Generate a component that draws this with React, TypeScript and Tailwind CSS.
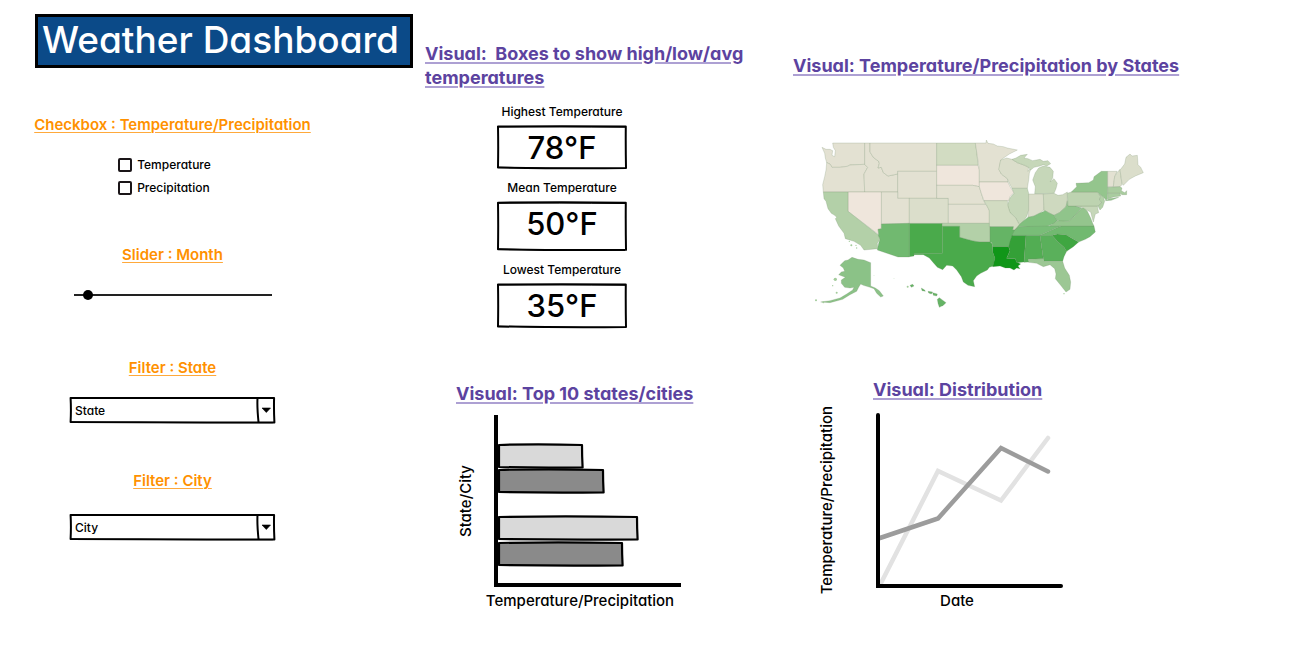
import { useState, type ReactNode } from "react";

const STATES: { id: string; fill: string; points: string }[] = [
  { id: "WA", fill: "#e3e1d2", points: "36,52 48,58 60,58 68,62 66,76 74,80 76,62 70,52 68,39 164,39 164,103 120,105 112,109 90,112 66,112 60,102 50,98 46,84 44,70" },
  { id: "OR", fill: "#e3e1d2", points: "50,98 60,102 66,112 90,112 112,109 120,105 164,103 173,112 162,132 164,186 40,186 38,164 44,140 48,120" },
  { id: "ID", fill: "#e3e1d2", points: "164,39 180,39 180,66 190,82 206,94 208,100 204,114 214,112 220,128 234,138 263,132 263,186 164,186 162,132 173,112 164,103" },
  { id: "MT", fill: "#e3e1d2", points: "180,39 380,39 380,124 263,124 263,132 234,138 220,128 214,112 204,114 208,100 206,94 190,82 180,66" },
  { id: "WY", fill: "#e3e1d2", points: "263,124 380,124 380,205 263,205" },
  { id: "UT", fill: "#e3e1d2", points: "214,186 263,186 263,205 298,205 298,280 214,282" },
  { id: "NV", fill: "#efe6dc", points: "114,186 214,186 214,296 204,298 206,314 114,244" },
  { id: "CA", fill: "#b3d0a8", points: "40,186 114,186 114,244 206,316 210,328 202,340 203,356 162,360 152,346 132,334 106,326 102,310 86,288 76,266 80,262 74,256 64,250 54,236 48,214 42,206" },
  { id: "AZ", fill: "#71b970", points: "214,282 298,280 298,381 264,381 202,360 206,340 210,328 205,316 206,312 204,298 214,296" },
  { id: "NM", fill: "#4aaa4b", points: "298,280 397,280 397,370 312,370 312,378 298,380" },
  { id: "CO", fill: "#dbdecb", points: "298,205 415,205 415,280 298,280" },
  { id: "ND", fill: "#d2dcc2", points: "380,39 496,39 500,62 504,106 380,106" },
  { id: "SD", fill: "#efe6dc", points: "380,106 504,106 508,120 508,170 488,166 380,166" },
  { id: "NE", fill: "#e3e1d2", points: "380,166 488,166 508,170 514,190 520,210 527,223 415,223 415,205 380,205" },
  { id: "KS", fill: "#e3e1d2", points: "415,223 527,223 534,232 538,242 538,280 415,280" },
  { id: "OK", fill: "#b3d0a8", points: "397,280 540,280 541,336 510,336 490,333 470,328 449,322 449,289 397,289" },
  { id: "TX", fill: "#4aaa4b", points: "397,289 449,289 449,322 470,328 490,333 510,336 541,336 547,342 548,366 555,384 550,408 538,412 532,420 512,430 500,438 490,452 494,470 474,466 460,456 454,440 440,420 428,408 410,406 398,419 382,412 370,398 358,384 340,374 312,374 312,370 397,370" },
  { id: "MN", fill: "#e3e1d2", points: "496,39 528,39 529,30 534,40 550,42 562,48 580,50 592,54 622,60 598,72 572,90 568,118 574,132 592,146 594,156 508,156 508,120 500,66" },
  { id: "IA", fill: "#efe6dc", points: "508,156 594,156 600,170 612,188 600,200 596,212 522,212 514,190 508,170" },
  { id: "WI", fill: "#dbdecb", points: "572,90 590,84 606,88 622,98 644,106 656,112 654,124 664,112 658,130 656,150 652,175 606,175 598,160 592,146 574,132 566,118" },
  { id: "MI-UP", fill: "#c6d7b9", points: "606,88 618,84 632,76 652,73 642,84 654,86 668,92 690,88 700,94 714,92 722,101 710,108 700,104 690,108 672,112 662,120 656,112 644,106 622,98" },
  { id: "MI", fill: "#c6d7b9", points: "674,191 676,170 668,150 676,128 686,114 700,108 720,112 730,124 728,144 720,156 732,146 742,160 738,176 732,190" },
  { id: "IL", fill: "#c6d7b9", points: "606,175 652,175 656,190 656,240 650,260 640,274 628,284 616,262 600,248 592,226 600,204 612,190" },
  { id: "IN", fill: "#dbdecb", points: "656,192 700,192 702,240 688,250 672,258 654,262 656,240" },
  { id: "OH", fill: "#ced9bf", points: "700,192 732,190 744,196 758,194 772,186 772,212 768,230 748,248 732,256 716,248 702,242" },
  { id: "MO", fill: "#d2dcc2", points: "522,212 592,212 594,228 600,248 616,262 628,284 618,300 608,300 610,290 538,290 538,242 530,226" },
  { id: "AR", fill: "#65b465", points: "540,290 610,290 608,300 618,300 606,320 598,350 548,350 546,338 540,336" },
  { id: "LA", fill: "#109618", points: "548,350 596,350 600,362 590,385 616,386 620,396 632,402 624,408 630,416 620,414 612,420 600,414 586,414 570,408 548,410 555,384 548,366" },
  { id: "MS", fill: "#34a037", points: "606,316 648,316 642,396 620,398 616,386 590,385 600,362 596,350 600,334" },
  { id: "AL", fill: "#52ad53", points: "648,316 690,316 700,386 654,388 658,396 642,397" },
  { id: "GA", fill: "#5ab05b", points: "690,316 726,316 742,334 762,352 770,364 762,380 758,394 702,394 700,386" },
  { id: "FL", fill: "#9cc794", points: "654,388 700,386 702,394 758,394 764,414 778,436 782,456 780,478 768,486 752,466 736,446 738,432 734,416 720,404 700,410 680,400 656,397" },
  { id: "SC", fill: "#3fa641", points: "726,316 742,312 770,314 778,320 806,336 790,350 770,364 762,352 742,334" },
  { id: "NC", fill: "#71b970", points: "754,288 852,288 856,306 840,320 826,328 806,336 778,320 766,314 742,312 718,318 690,316 720,302 744,292" },
  { id: "TN", fill: "#79bd78", points: "626,290 680,286 754,288 744,292 720,302 690,316 606,316 614,300" },
  { id: "KY", fill: "#81c07e", points: "616,298 632,280 654,262 672,258 688,250 706,242 716,248 732,256 742,272 730,282 712,288 626,290" },
  { id: "WV", fill: "#90c48b", points: "732,256 748,248 768,230 772,212 774,228 796,228 816,234 804,246 792,260 776,274 750,274 740,270" },
  { id: "VA", fill: "#94c58d", points: "720,288 742,272 776,274 792,260 804,246 820,232 832,244 842,264 848,280 852,288" },
  { id: "MD", fill: "#c6d7b9", points: "796,228 862,228 866,248 856,252 850,276 846,262 842,246 834,242 816,232" },
  { id: "PA", fill: "#bdd3b0", points: "772,190 784,186 862,186 872,200 868,210 876,218 864,228 774,228" },
  { id: "NJ", fill: "#b3d0a8", points: "866,190 880,200 884,214 878,232 870,240 864,228 876,218 868,210 872,200" },
  { id: "NY", fill: "#94c58d", points: "784,186 800,170 798,160 836,158 850,150 852,140 874,124 893,124 893,170 892,206 888,211 880,200 866,190 862,186" },
  { id: "LI", fill: "#94c58d", points: "886,212 898,206 926,202 904,211" },
  { id: "VT", fill: "#e3e1d2", points: "893,124 921,124 914,140 910,170 893,170" },
  { id: "NH", fill: "#dbdecb", points: "921,128 930,118 936,164 930,170 910,170 914,140" },
  { id: "ME", fill: "#dbdecb", points: "930,120 944,102 948,82 960,72 966,78 982,76 984,104 992,112 1000,128 976,138 958,148 940,166 936,160" },
  { id: "MA", fill: "#a9cc9f", points: "893,172 930,170 936,174 934,182 944,188 950,182 950,194 936,194 930,190 893,190" },
  { id: "CT", fill: "#a9cc9f", points: "893,190 930,190 932,198 910,201 893,207" },
  { id: "AK", fill: "#8bc287", points: "90,406 104,392 114,390 126,382 144,388 162,390 182,398 182,468 196,474 208,482 220,498 212,501 200,490 192,476 180,472 160,466 152,462 146,472 140,484 120,494 98,508 60,518 32,516 60,512 90,504 110,492 128,480 132,472 120,474 104,472 94,460 94,450 106,442 86,434 94,426 104,424 100,414" },
  { id: "HI-1", fill: "#65b465", points: "382,508 388,503 408,518 400,526 388,532 384,520" },
  { id: "HI-2", fill: "#65b465", points: "368,488 382,492 380,498 370,496" },
  { id: "HI-3", fill: "#65b465", points: "334,474 344,480 346,484 336,482" },
  { id: "HI-4", fill: "#65b465", points: "300,466 308,463 312,468 304,472" },
  { id: "HI-5", fill: "#65b465", points: "354,484 368,486 364,492 356,489" },
];

const ISLETS: [number, number, number][] = [
  [76, 448, 5], [68, 467, 2], [80, 488, 3], [18, 511, 3], [293, 470, 3],
  [118, 334, 2], [124, 346, 3], [138, 346, 2], [140, 354, 2], [192, 436, 1],
  [252, 446, 1], [40, 517, 3], [762, 491, 2],
];

function StatesMap() {
  return (
    <svg viewBox="0 0 1020 570" className="block w-[340px]" role="img" aria-label="Temperature/Precipitation by States">
      <g strokeLinejoin="round" stroke="#6f8a63" strokeOpacity="0.22" strokeWidth="3">
        {STATES.map((s) => (
          <polygon key={s.id} points={s.points} fill={s.fill} />
        ))}
      </g>
      {ISLETS.map(([cx, cy, r]) => (
        <circle key={`${cx}-${cy}`} cx={cx} cy={cy} r={r} fill="#a3cb9b" />
      ))}
    </svg>
  );
}

/* Slightly uneven hand-drawn outline that stretches to its parent. */
function SketchFrame() {
  return (
    <svg
      viewBox="0 0 130 44"
      preserveAspectRatio="none"
      className="pointer-events-none absolute inset-0 h-full w-full overflow-visible"
      fill="none"
      stroke="#000"
      strokeWidth="2"
      strokeLinejoin="round"
      aria-hidden="true"
    >
      <path vectorEffect="non-scaling-stroke" d="M1 1.500 Q65 .8 128.800 1.500 Q128.600 22 129 43 Q65 43.500 1 42.500 Q1.400 22 1 1.500Z" />
      <path vectorEffect="non-scaling-stroke" strokeWidth="1" d="M1 2 Q60 1.500 128 2.200 M1 42 Q40 43.500 128 43.500" />
    </svg>
  );
}

function ControlHeading({ children }: { children: ReactNode }) {
  return (
    <h2 className="text-[15px] leading-5 font-semibold whitespace-nowrap text-[#ff9100] underline decoration-[#ffa93b] decoration-1 underline-offset-2">
      {children}
    </h2>
  );
}

function VisualHeading({ children }: { children: ReactNode }) {
  return (
    <h2 className="text-lg leading-6 font-bold whitespace-nowrap text-[#5c43a0] underline decoration-[#ada0d3] decoration-2 underline-offset-2">
      {children}
    </h2>
  );
}

function Check({ label }: { label: string }) {
  return (
    <label className="flex h-[23px] items-center gap-[5px] text-xs font-medium">
      <input type="checkbox" className="size-[14px] appearance-none rounded-[2px] border-2 border-[#1a1518] bg-white checked:bg-black" />
      {label}
    </label>
  );
}

function Picker({ label, options }: { label: string; options: string[] }) {
  return (
    <div className="relative h-[26px] w-[207px]">
      <select aria-label={label} className="h-full w-full appearance-none bg-transparent px-[6px] pb-px text-xs font-medium text-black">
        <option>{label}</option>
        {options.map((o) => (
          <option key={o}>{o}</option>
        ))}
      </select>
      <SketchFrame />
      <svg viewBox="0 0 20 26" className="pointer-events-none absolute inset-y-0 right-0 w-5" aria-hidden="true">
        <path d="M1.500 1 Q1 10 2.500 25" fill="none" stroke="#000" strokeWidth="2" />
        <path d="M6 11 H14.500 L10.300 15.500Z" fill="#000" stroke="#000" strokeWidth=".6" strokeLinejoin="round" />
      </svg>
    </div>
  );
}

function Reading({ label, value, box }: { label: string; value: string; box: string }) {
  return (
    <div className="flex flex-col items-center">
      <dt className="text-xs leading-4 font-medium">{label}</dt>
      <dd className={`relative mt-[5px] w-[130px] text-center text-[31px] leading-[46px] font-medium ${box}`}>
        <SketchFrame />
        {value}
      </dd>
    </div>
  );
}

function BarPlot() {
  const bars = [
    { y: 30, w: 84, fill: "#d9d9d9" },
    { y: 55, w: 105, fill: "#8a8a8a" },
    { y: 102, w: 139, fill: "#d9d9d9" },
    { y: 128, w: 124, fill: "#8a8a8a" },
  ];
  return (
    <svg viewBox="0 0 187 172" className="block w-[187px]" role="img" aria-label="Top 10 states/cities bar chart">
      <g stroke="#000" strokeWidth="2.200" strokeLinejoin="round">
        {bars.map(({ y, w, fill }) => (
          <path
            key={y}
            fill={fill}
            d={`M5 ${y} Q${w / 2} ${y - 1.4} ${w + 4} ${y} Q${w + 4} ${y + 11} ${w + 4.6} ${y + 22.4} Q${w / 2} ${y + 23} 5 ${y + 22} Z`}
          />
        ))}
      </g>
      <path d="M2 0 V170 H187" fill="none" stroke="#000" strokeWidth="4" />
    </svg>
  );
}

function LinePlot() {
  return (
    <svg viewBox="0 0 188 176" className="block w-[188px]" role="img" aria-label="Distribution line chart">
      <g fill="none" strokeWidth="4.500" strokeLinecap="round">
        <path d="M4 172 L62 58 L125 87.500 L172 25" stroke="#e2e2e2" />
        <path d="M4 125 L62 105.500 L125 35 L172 58.500" stroke="#9c9c9c" />
        <path d="M2 2 V173 H185" stroke="#000" strokeWidth="4" />
      </g>
    </svg>
  );
}

function AxisLabel({ children }: { children: ReactNode }) {
  return <span className="rotate-180 text-[15px] leading-5 font-medium whitespace-nowrap [writing-mode:vertical-rl]">{children}</span>;
}

export default function App() {
  const [month, setMonth] = useState(5);

  return (
    <main className="grid min-h-screen grid-cols-[392fr_368fr_509fr] items-start bg-white pb-6 pl-[33px] font-[Inter,'Liberation_Sans',sans-serif] text-black [font-feature-settings:'cv11']">
      <section className="pt-[14px] pr-3">
        <h1 className="ml-[2px] flex h-[54px] items-start border-[3px] border-black bg-[#0b4a88] px-1 text-[37px] leading-[46px] font-medium whitespace-nowrap text-white">
          Weather Dashboard
        </h1>
        <div className="mt-[47px] flex w-[279px] flex-col items-center">
          <ControlHeading>Checkbox : Temperature/Precipitation</ControlHeading>
          <div className="mt-[18px] mr-4">
            <Check label="Temperature" />
            <Check label="Precipitation" />
          </div>
          <div className="mt-[46px] flex flex-col items-center gap-[23px]">
            <ControlHeading>Slider : Month</ControlHeading>
            <input
              type="range"
              aria-label="Month"
              min={0}
              max={100}
              value={month}
              onChange={(e) => setMonth(Number(e.target.value))}
              className="h-[14px] w-[198px] appearance-none bg-[linear-gradient(#222,#222)] bg-[length:100%_2px] bg-center bg-no-repeat [&::-webkit-slider-thumb]:size-[10px] [&::-webkit-slider-thumb]:appearance-none [&::-webkit-slider-thumb]:rounded-full [&::-webkit-slider-thumb]:bg-black"
            />
          </div>
          <div className="mt-14 flex flex-col items-center gap-[19px]">
            <ControlHeading>Filter : State</ControlHeading>
            <Picker label="State" options={["Louisiana", "Texas"]} />
          </div>
          <div className="mt-12 flex flex-col items-center gap-[23px]">
            <ControlHeading>Filter : City</ControlHeading>
            <Picker label="City" options={["New Orleans", "Houston"]} />
          </div>
        </div>
      </section>

      <section className="pt-[42px]">
        <VisualHeading>
          Visual:&nbsp; Boxes to show high/low/avg
          <br />
          temperatures
        </VisualHeading>
        <dl className="mt-[14px] flex w-[274px] flex-col items-center gap-[11px]">
          <Reading label="Highest Temperature" value="78°F" box="h-[44px]" />
          <Reading label="Mean Temperature" value="50°F" box="h-[50px]" />
          <Reading label="Lowest Temperature" value="35°F" box="h-[45px]" />
        </dl>
        <div className="mt-[54px] pl-[31px]">
          <VisualHeading>Visual: Top 10 states/cities</VisualHeading>
          <div className="mt-[9px] flex items-center gap-[18px]">
            <AxisLabel>State/City</AxisLabel>
            <BarPlot />
          </div>
          <p className="mt-1 w-[248px] text-center text-[15px] leading-5 font-medium">Temperature/Precipitation</p>
        </div>
      </section>

      <section className="pt-[54px]">
        <VisualHeading>Visual: Temperature/Precipitation by States</VisualHeading>
        <div className="mt-[52px] ml-[17px]">
          <StatesMap />
        </div>
        <div className="mt-[58px] ml-6">
          <div className="ml-14">
            <VisualHeading>Visual: Distribution</VisualHeading>
          </div>
          <div className="mt-1 flex items-start gap-[39px]">
            <AxisLabel>Temperature/Precipitation</AxisLabel>
            <div className="pt-[7px]">
              <LinePlot />
              <p className="mt-[2px] pr-[26px] text-center text-[15px] leading-5 font-medium">Date</p>
            </div>
          </div>
        </div>
      </section>
    </main>
  );
}
